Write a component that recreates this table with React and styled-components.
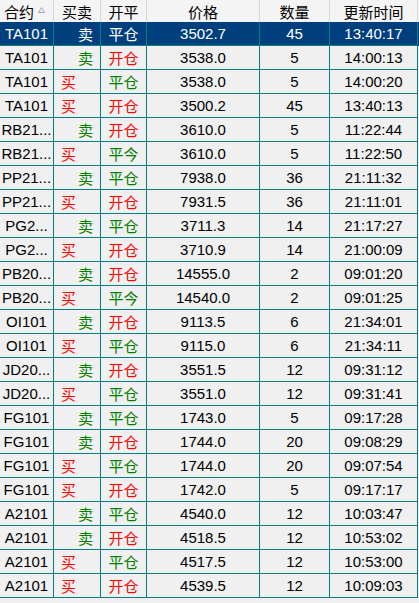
import React from 'react';
import styled, { createGlobalStyle } from 'styled-components';

const rows = [
  ['TA101', '卖', '平仓', '3502.7', '45', '13:40:17'],
  ['TA101', '卖', '开仓', '3538.0', '5', '14:00:13'],
  ['TA101', '买', '平仓', '3538.0', '5', '14:00:20'],
  ['TA101', '买', '开仓', '3500.2', '45', '13:40:13'],
  ['RB21...', '卖', '开仓', '3610.0', '5', '11:22:44'],
  ['RB21...', '买', '平今', '3610.0', '5', '11:22:50'],
  ['PP21...', '卖', '平仓', '7938.0', '36', '21:11:32'],
  ['PP21...', '买', '开仓', '7931.5', '36', '21:11:01'],
  ['PG2...', '卖', '平仓', '3711.3', '14', '21:17:27'],
  ['PG2...', '买', '开仓', '3710.9', '14', '21:00:09'],
  ['PB20...', '卖', '开仓', '14555.0', '2', '09:01:20'],
  ['PB20...', '买', '平今', '14540.0', '2', '09:01:25'],
  ['OI101', '卖', '开仓', '9113.5', '6', '21:34:01'],
  ['OI101', '买', '平仓', '9115.0', '6', '21:34:11'],
  ['JD20...', '卖', '开仓', '3551.5', '12', '09:31:12'],
  ['JD20...', '买', '平仓', '3551.0', '12', '09:31:41'],
  ['FG101', '卖', '平仓', '1743.0', '5', '09:17:28'],
  ['FG101', '卖', '开仓', '1744.0', '20', '09:08:29'],
  ['FG101', '买', '平仓', '1744.0', '20', '09:07:54'],
  ['FG101', '买', '开仓', '1742.0', '5', '09:17:17'],
  ['A2101', '卖', '平仓', '4540.0', '12', '10:03:47'],
  ['A2101', '卖', '开仓', '4518.5', '12', '10:53:02'],
  ['A2101', '买', '平仓', '4517.5', '12', '10:53:00'],
  ['A2101', '买', '开仓', '4539.5', '12', '10:09:03'],
];

const COLS = '54px 47px 46px 113px 70px 88px';

const GlobalStyle = createGlobalStyle`
  html, body {
    margin: 0;
    padding: 0;
    background: #f0f0f0;
  }
  body {
    font-family: "Liberation Sans", "Noto Sans CJK SC", sans-serif;
    font-size: 15px;
    color: #000;
  }
`;

const Table = styled.div`
  width: 419px;
  height: 603px;
  background: #f0f0f0;
  overflow: hidden;
`;

const HeaderRow = styled.div`
  display: grid;
  grid-template-columns: ${COLS};
  height: 22px;
  background: #f4f4f4;
`;

const HeadCell = styled.div`
  display: flex;
  align-items: center;
  justify-content: ${p => (p.$left ? 'flex-start' : 'center')};
  padding-left: ${p => (p.$left ? '4px' : '0')};
  gap: 4px;
  border-right: 1px solid #d9d9d9;
  box-sizing: border-box;
  white-space: nowrap;
`;

const SortMark = styled.svg`
  width: 7px;
  height: 6px;
  margin-top: -2px;
`;

const Row = styled.div`
  display: grid;
  grid-template-columns: ${COLS};
  height: 24px;
  background: ${p => (p.$selected ? '#003f7e' : '#f0f0f0')};
  color: ${p => (p.$selected ? '#fff' : '#000')};
`;

const Cell = styled.div`
  display: flex;
  align-items: center;
  justify-content: ${p => p.$align || 'center'};
  padding: 0 7px;
  box-sizing: border-box;
  border-right: 1px solid #008080;
  border-bottom: 1px solid #008080;
  white-space: nowrap;
  overflow: hidden;
  padding-bottom: 1px;
`;

const Colored = styled.span`
  color: ${p => (p.$selected ? '#fff' : p.$red ? '#ff0000' : '#008000')};
`;

export default function App() {
  return (
    <>
      <GlobalStyle />
      <Table>
        <HeaderRow>
          <HeadCell $left>
            合约
            <SortMark viewBox="0 0 7 6">
              <path d="M3.5 0.5 L6.5 5.5 L0.5 5.5 Z" fill="none" stroke="#a8a8a8" strokeWidth="1" />
            </SortMark>
          </HeadCell>
          <HeadCell>买卖</HeadCell>
          <HeadCell>开平</HeadCell>
          <HeadCell>价格</HeadCell>
          <HeadCell>数量</HeadCell>
          <HeadCell>更新时间</HeadCell>
        </HeaderRow>
        {rows.map((r, i) => {
          const sel = i === 0;
          const buy = r[1] === '买';
          return (
            <Row key={i} $selected={sel}>
              <Cell style={{ padding: 0 }}>{r[0]}</Cell>
              <Cell $align={buy ? 'flex-start' : 'flex-end'}>
                <Colored $selected={sel} $red={buy}>{r[1]}</Colored>
              </Cell>
              <Cell>
                <Colored $selected={sel} $red={r[2] === '开仓'}>{r[2]}</Colored>
              </Cell>
              <Cell>{r[3]}</Cell>
              <Cell>{r[4]}</Cell>
              <Cell>{r[5]}</Cell>
            </Row>
          );
        })}
      </Table>
    </>
  );
}
